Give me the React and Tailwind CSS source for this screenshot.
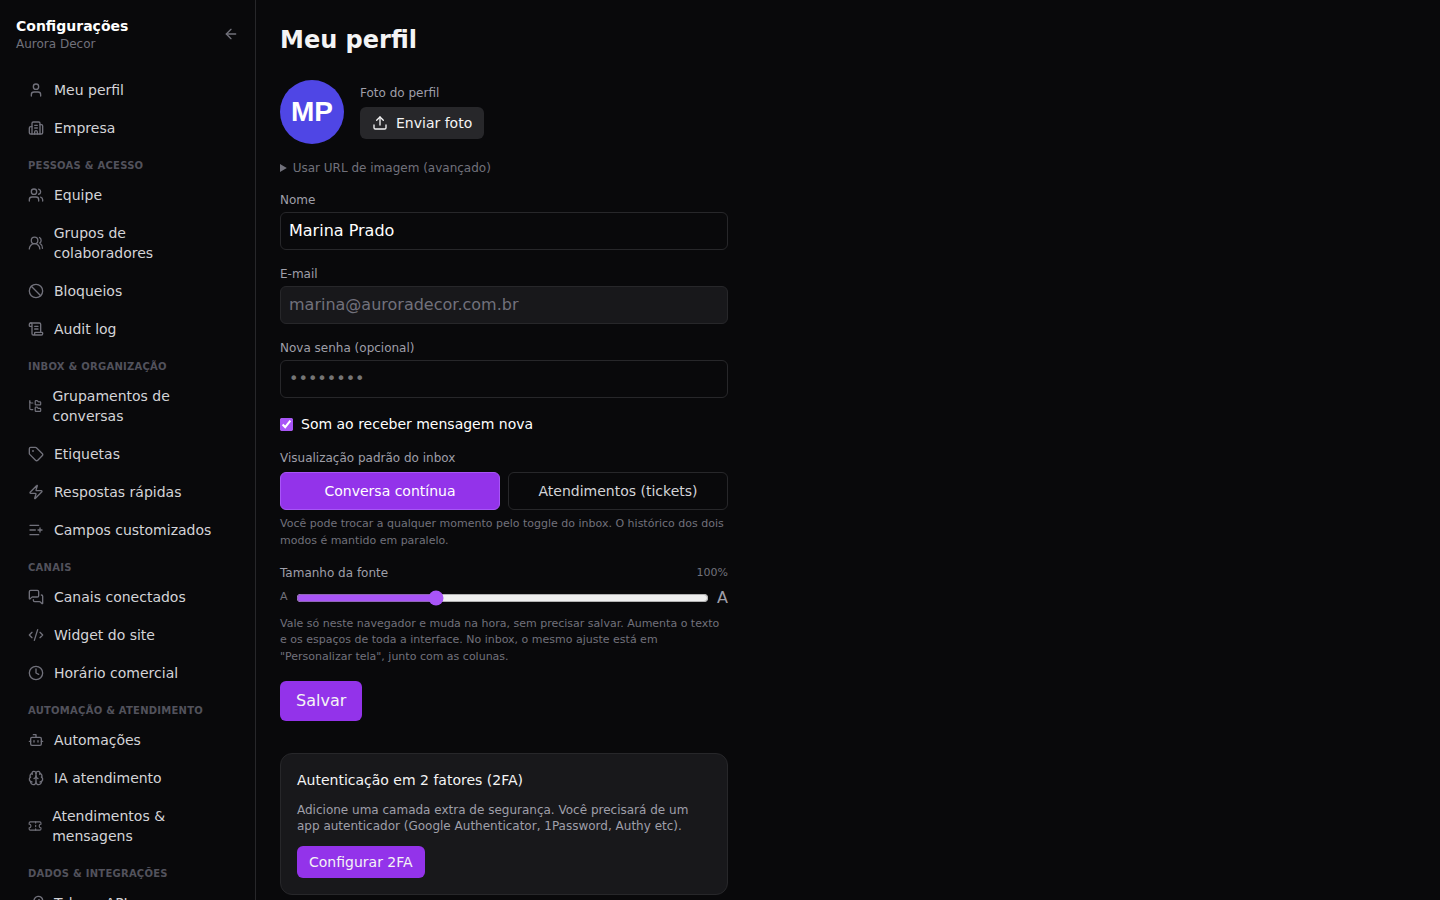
import { useState } from 'react';
import {
  ArrowLeft,
  Ban,
  Bot,
  Brain,
  Building2,
  Clock,
  CodeXml,
  FolderTree,
  KeyRound,
  ListPlus,
  MessagesSquare,
  ScrollText,
  Tag,
  Ticket,
  Upload,
  User,
  Users,
  UsersRound,
  Zap,
} from 'lucide-react';

const sections = [
  {
    items: [
      { label: 'Meu perfil', icon: User },
      { label: 'Empresa', icon: Building2 },
    ],
  },
  {
    title: 'Pessoas & acesso',
    items: [
      { label: 'Equipe', icon: Users },
      { label: 'Grupos de colaboradores', icon: UsersRound },
      { label: 'Bloqueios', icon: Ban },
      { label: 'Audit log', icon: ScrollText },
    ],
  },
  {
    title: 'Inbox & organização',
    items: [
      { label: 'Grupamentos de conversas', icon: FolderTree },
      { label: 'Etiquetas', icon: Tag },
      { label: 'Respostas rápidas', icon: Zap },
      { label: 'Campos customizados', icon: ListPlus },
    ],
  },
  {
    title: 'Canais',
    items: [
      { label: 'Canais conectados', icon: MessagesSquare },
      { label: 'Widget do site', icon: CodeXml },
      { label: 'Horário comercial', icon: Clock },
    ],
  },
  {
    title: 'Automação & atendimento',
    items: [
      { label: 'Automações', icon: Bot },
      { label: 'IA atendimento', icon: Brain },
      { label: 'Atendimentos & mensagens', icon: Ticket },
    ],
  },
  {
    title: 'Dados & integrações',
    items: [{ label: 'Tokens API', icon: KeyRound }],
  },
];

function Sidebar() {
  return (
    <aside className="w-64 shrink-0 border-r border-zinc-800 flex flex-col overflow-y-auto [scrollbar-width:none]">
      <div className="flex items-center justify-between p-4">
        <div>
          <h2 className="text-sm font-semibold text-white">Configurações</h2>
          <p className="text-xs text-zinc-500">Aurora Decor</p>
        </div>
        <button type="button" aria-label="Voltar" className="text-zinc-500 hover:text-white cursor-pointer">
          <ArrowLeft size={16} />
        </button>
      </div>

      <nav className="px-4 pt-1 pb-4">
        {sections.map((section) => (
          <div key={section.title || 'geral'}>
            {section.title && (
              <h3 className="px-3 pt-3 pb-1 text-[10px] leading-[15px] font-semibold uppercase tracking-wide text-zinc-600">
                {section.title}
              </h3>
            )}
            <div className="space-y-0.5">
              {section.items.map(({ label, icon: Icon }) => (
                <a
                  key={label}
                  href="#"
                  className="flex items-center gap-2.5 px-3 py-2 rounded-lg text-sm text-zinc-300 hover:bg-zinc-900"
                >
                  <Icon size={16} className="text-zinc-500" />
                  <span>{label}</span>
                </a>
              ))}
            </div>
          </div>
        ))}
      </nav>
    </aside>
  );
}

export default function App() {
  const [name, setName] = useState('Marina Prado');
  const [password, setPassword] = useState('');
  const [sound, setSound] = useState(true);
  const [view, setView] = useState('continuous');
  const [fontSize, setFontSize] = useState(100);

  const viewClass = (active) =>
    active ? 'bg-[#9333ea] border-[#a855f7] text-white' : 'border-zinc-800 text-zinc-300 hover:bg-zinc-900';

  return (
    <div className="flex h-screen bg-zinc-950 text-white font-['DejaVu_Sans',sans-serif]">
      <Sidebar />

      <main className="flex-1 overflow-y-auto p-6">
        <div className="max-w-md">
          <h1 className="text-2xl font-bold text-zinc-100 mb-6">Meu perfil</h1>

          <form onSubmit={(e) => e.preventDefault()} className="space-y-4">
            <div className="flex items-center gap-4">
              <div className="size-16 rounded-full bg-[#4f46e5] flex items-center justify-center text-[28px] leading-none font-bold font-['Liberation_Sans',sans-serif]">
                MP
              </div>
              <div>
                <p className="text-xs text-zinc-400 mb-1.5">Foto do perfil</p>
                <button
                  type="button"
                  className="flex items-center gap-2 bg-zinc-800 hover:bg-zinc-700 text-sm text-zinc-100 px-3 py-1.5 rounded-md cursor-pointer"
                >
                  <Upload size={16} />
                  Enviar foto
                </button>
              </div>
            </div>

            <details className="text-xs text-zinc-500">
              <summary className="cursor-pointer">Usar URL de imagem (avançado)</summary>
              <input
                type="url"
                aria-label="URL da imagem"
                placeholder="https://"
                className="mt-2 w-full border border-zinc-800 rounded-md p-2 text-base outline-none"
              />
            </details>

            <div>
              <label htmlFor="name" className="block text-xs text-zinc-400 mb-1">Nome</label>
              <input
                id="name"
                type="text"
                value={name}
                onChange={(e) => setName(e.target.value)}
                className="block w-full border border-zinc-800 rounded-md p-2 leading-5 outline-none focus:border-[#a855f7]"
              />
            </div>

            <div>
              <label htmlFor="email" className="block text-xs text-zinc-400 mb-1">E-mail</label>
              <input
                id="email"
                type="email"
                disabled
                value="marina@auroradecor.com.br"
                className="block w-full border border-zinc-800 bg-zinc-900 text-zinc-500 rounded-md p-2 leading-5"
              />
            </div>

            <div>
              <label htmlFor="password" className="block text-xs text-zinc-400 mb-1">Nova senha (opcional)</label>
              <input
                id="password"
                type="password"
                placeholder="••••••••"
                value={password}
                onChange={(e) => setPassword(e.target.value)}
                className="block w-full border border-zinc-800 rounded-md p-2 leading-5 outline-none placeholder:text-[#757575] focus:border-[#a855f7]"
              />
            </div>

            <label className="flex items-center gap-2 text-sm">
              <input
                type="checkbox"
                checked={sound}
                onChange={(e) => setSound(e.target.checked)}
                className="accent-[#a855f7]"
              />
              Som ao receber mensagem nova
            </label>

            <div>
              <p className="text-xs text-zinc-400 mb-1.5">Visualização padrão do inbox</p>
              <div className="grid grid-cols-2 gap-2">
                <button
                  type="button"
                  onClick={() => setView('continuous')}
                  className={`border rounded-md px-3 py-2 text-sm cursor-pointer ${viewClass(view === 'continuous')}`}
                >
                  Conversa contínua
                </button>
                <button
                  type="button"
                  onClick={() => setView('tickets')}
                  className={`border rounded-md px-3 py-2 text-sm cursor-pointer ${viewClass(view === 'tickets')}`}
                >
                  Atendimentos (tickets)
                </button>
              </div>
              <p className="text-[11px] leading-normal text-zinc-500 mt-1.5">
                Você pode trocar a qualquer momento pelo toggle do inbox. O histórico dos dois modos é mantido em
                paralelo.
              </p>
            </div>

            <div>
              <div className="flex items-center justify-between mb-1">
                <label htmlFor="font-size" className="text-xs text-zinc-400">Tamanho da fonte</label>
                <span className="text-[11px] leading-normal text-zinc-500">{fontSize}%</span>
              </div>
              <div className="flex items-center gap-2">
                <span className="text-[11px] leading-normal text-zinc-500">A</span>
                <input
                  id="font-size"
                  type="range"
                  min="80"
                  max="140"
                  step="5"
                  value={fontSize}
                  onChange={(e) => setFontSize(Number(e.target.value))}
                  className="flex-1 min-w-0 accent-[#a855f7]"
                />
                <span className="text-base text-zinc-400">A</span>
              </div>
              <p className="text-[11px] leading-normal text-zinc-500 mt-1.5">
                Vale só neste navegador e muda na hora, sem precisar salvar. Aumenta o texto e os espaços de toda a
                interface. No inbox, o mesmo ajuste está em "Personalizar tela", junto com as colunas.
              </p>
            </div>

            <button
              type="submit"
              className="bg-[#9333ea] hover:bg-[#a855f7] text-zinc-100 px-4 py-2 rounded-md cursor-pointer"
            >
              Salvar
            </button>
          </form>

          <section className="mt-8 bg-zinc-900 border border-zinc-800 rounded-xl p-4">
            <h2 className="text-sm font-medium text-zinc-100 mb-3">Autenticação em 2 fatores (2FA)</h2>
            <p className="text-xs text-zinc-400 mb-3">
              Adicione uma camada extra de segurança. Você precisará de um app autenticador (Google Authenticator,
              1Password, Authy etc).
            </p>
            <button
              type="button"
              className="bg-[#9333ea] hover:bg-[#a855f7] text-sm text-zinc-100 px-3 py-1.5 rounded-md cursor-pointer"
            >
              Configurar 2FA
            </button>
          </section>
        </div>
      </main>
    </div>
  );
}
